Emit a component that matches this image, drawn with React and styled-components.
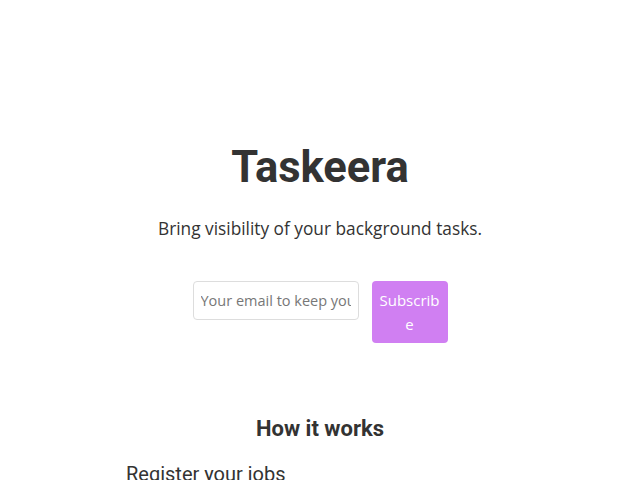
import React from 'react';
import styled, { createGlobalStyle } from 'styled-components';

const GlobalStyle = createGlobalStyle`
  body {
    margin: 0;
    background: #fff;
    color: #333;
    font-family: 'Open Sans', sans-serif;
  }
`;

const Page = styled.main`
  display: flex;
  flex-direction: column;
  align-items: center;
  padding-top: 140px;
`;

const Title = styled.h1`
  margin: 0;
  font-family: Roboto, sans-serif;
  font-weight: 700;
  font-size: 43.5px;
  line-height: 56px;
  color: #333;
`;

const Tagline = styled.p`
  margin: 19px 0 0;
  font-size: 17.3px;
  line-height: 28px;
  color: #333;
`;

const Form = styled.form`
  display: flex;
  align-items: flex-start;
  gap: 13px;
  margin-top: 38px;
`;

const EmailInput = styled.input`
  box-sizing: border-box;
  width: 166px;
  height: 39px;
  padding: 0 7px;
  border: 1px solid #ddd;
  border-radius: 4px;
  font-family: 'Open Sans', sans-serif;
  font-size: 14.5px;
  color: #333;
  outline: none;

  &::placeholder {
    color: #777;
  }
`;

const SubscribeButton = styled.button`
  box-sizing: border-box;
  width: 76px;
  height: 62px;
  padding: 6px 4px;
  border: none;
  border-radius: 4px;
  background: #d07ff2;
  color: #fff;
  font-family: 'Open Sans', sans-serif;
  font-size: 15px;
  line-height: 24px;
  word-break: break-all;
`;

const Section = styled.section`
  align-self: stretch;
  display: flex;
  flex-direction: column;
  align-items: center;
  margin-top: 71px;
`;

const SectionTitle = styled.h2`
  margin: 0;
  font-family: Roboto, sans-serif;
  font-weight: 700;
  font-size: 22px;
  line-height: 30px;
  color: #333;
`;

const Steps = styled.ol`
  align-self: stretch;
  list-style: none;
  margin: 16px 0 0;
  padding: 0 0 0 126px;
`;

const Step = styled.li`
  font-family: Roboto, sans-serif;
  font-size: 20px;
  line-height: 28px;
  color: #333;
`;

export default function App() {
  return (
    <>
      <GlobalStyle />
      <Page>
        <Title>Taskeera</Title>
        <Tagline>Bring visibility of your background tasks.</Tagline>
        <Form onSubmit={(e) => e.preventDefault()}>
          <EmailInput type="email" placeholder="Your email to keep you updated" />
          <SubscribeButton type="submit">Subscribe</SubscribeButton>
        </Form>
        <Section>
          <SectionTitle>How it works</SectionTitle>
          <Steps>
            <Step>Register your jobs</Step>
          </Steps>
        </Section>
      </Page>
    </>
  );
}
